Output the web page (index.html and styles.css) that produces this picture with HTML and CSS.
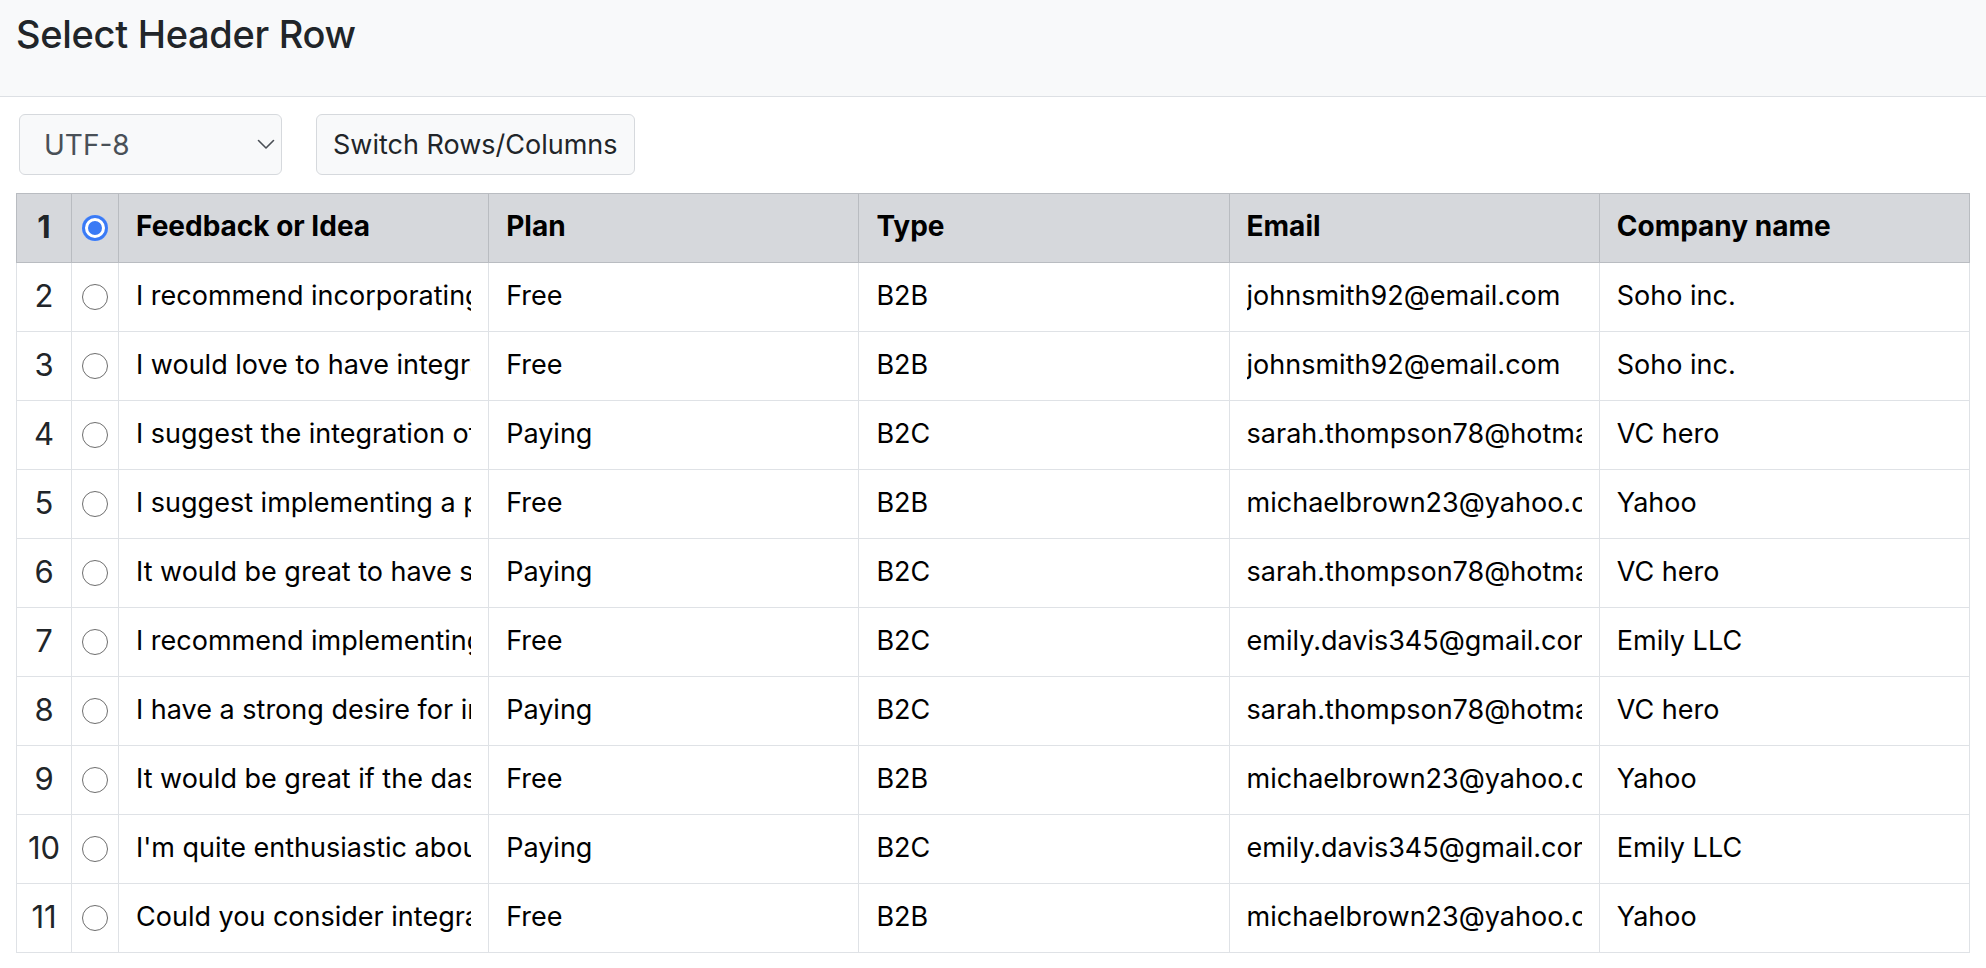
FILE: index.html
```html
<!DOCTYPE html>
<html lang="en">
<head>
<meta charset="utf-8">
<title>Select Header Row</title>
<link rel="stylesheet" href="styles.css">
</head>
<body>
<header class="page-header">
  <h1 class="title">Select Header Row</h1>
</header>
<div class="toolbar">
  <div class="select-wrap">
    <select class="encoding">
      <option>UTF-8</option>
    </select>
    <svg class="chevron" width="18" height="11" viewBox="0 0 18 11"><path d="M1.5 1.5 L9 9 L16.5 1.5" fill="none" stroke="#4a4f55" stroke-width="1.6" stroke-linecap="round" stroke-linejoin="round"/></svg>
  </div>
  <button class="btn">Switch Rows/Columns</button>
</div>
<table class="grid">
  <colgroup>
    <col class="c-num"><col class="c-radio"><col><col><col><col><col>
  </colgroup>
  <thead>
    <tr>
      <th class="num">1</th>
      <th class="rad"><input type="radio" name="hdr" class="radio" checked></th>
      <th><div class="clip">Feedback or Idea</div></th>
      <th><div class="clip">Plan</div></th>
      <th><div class="clip">Type</div></th>
      <th><div class="clip">Email</div></th>
      <th><div class="clip">Company name</div></th>
    </tr>
  </thead>
  <tbody>
    <tr><td class="num">2</td><td class="rad"><input type="radio" name="hdr" class="radio"></td><td><div class="clip">I recommend incorporating a feature</div></td><td><div class="clip">Free</div></td><td><div class="clip">B2B</div></td><td><div class="clip">johnsmith92@email.com</div></td><td><div class="clip">Soho inc.</div></td></tr>
    <tr><td class="num">3</td><td class="rad"><input type="radio" name="hdr" class="radio"></td><td><div class="clip">I would love to have integration</div></td><td><div class="clip">Free</div></td><td><div class="clip">B2B</div></td><td><div class="clip">johnsmith92@email.com</div></td><td><div class="clip">Soho inc.</div></td></tr>
    <tr><td class="num">4</td><td class="rad"><input type="radio" name="hdr" class="radio"></td><td><div class="clip">I suggest the integration of</div></td><td><div class="clip">Paying</div></td><td><div class="clip">B2C</div></td><td><div class="clip">sarah.thompson78@hotmail.com</div></td><td><div class="clip">VC hero</div></td></tr>
    <tr><td class="num">5</td><td class="rad"><input type="radio" name="hdr" class="radio"></td><td><div class="clip">I suggest implementing a progress</div></td><td><div class="clip">Free</div></td><td><div class="clip">B2B</div></td><td><div class="clip">michaelbrown23@yahoo.com</div></td><td><div class="clip">Yahoo</div></td></tr>
    <tr><td class="num">6</td><td class="rad"><input type="radio" name="hdr" class="radio"></td><td><div class="clip">It would be great to have support</div></td><td><div class="clip">Paying</div></td><td><div class="clip">B2C</div></td><td><div class="clip">sarah.thompson78@hotmail.com</div></td><td><div class="clip">VC hero</div></td></tr>
    <tr><td class="num">7</td><td class="rad"><input type="radio" name="hdr" class="radio"></td><td><div class="clip">I recommend implementing</div></td><td><div class="clip">Free</div></td><td><div class="clip">B2C</div></td><td><div class="clip">emily.davis345@gmail.com</div></td><td><div class="clip">Emily LLC</div></td></tr>
    <tr><td class="num">8</td><td class="rad"><input type="radio" name="hdr" class="radio"></td><td><div class="clip">I have a strong desire for integration</div></td><td><div class="clip">Paying</div></td><td><div class="clip">B2C</div></td><td><div class="clip">sarah.thompson78@hotmail.com</div></td><td><div class="clip">VC hero</div></td></tr>
    <tr><td class="num">9</td><td class="rad"><input type="radio" name="hdr" class="radio"></td><td><div class="clip">It would be great if the dashboard</div></td><td><div class="clip">Free</div></td><td><div class="clip">B2B</div></td><td><div class="clip">michaelbrown23@yahoo.com</div></td><td><div class="clip">Yahoo</div></td></tr>
    <tr><td class="num">10</td><td class="rad"><input type="radio" name="hdr" class="radio"></td><td><div class="clip">I'm quite enthusiastic about</div></td><td><div class="clip">Paying</div></td><td><div class="clip">B2C</div></td><td><div class="clip">emily.davis345@gmail.com</div></td><td><div class="clip">Emily LLC</div></td></tr>
    <tr><td class="num">11</td><td class="rad"><input type="radio" name="hdr" class="radio"></td><td><div class="clip">Could you consider integrating</div></td><td><div class="clip">Free</div></td><td><div class="clip">B2B</div></td><td><div class="clip">michaelbrown23@yahoo.com</div></td><td><div class="clip">Yahoo</div></td></tr>
  </tbody>
</table>
</body>
</html>
```

FILE: styles.css
```css
* { box-sizing: border-box; }
html, body { margin: 0; padding: 0; background: #fff; }
body {
  font-family: Inter, "Liberation Sans", Arial, sans-serif;
  color: #000;
}
.page-header {
  background: #f8f9fa;
  border-bottom: 1px solid #dde0e4;
  height: 97px;
  padding: 11px 16px 0 16px;
}
.title {
  margin: 0;
  font-size: 38px;
  line-height: 46px;
  font-weight: 500;
  color: #212529;
  letter-spacing: -0.3px;
}
.toolbar {
  display: flex;
  align-items: center;
  gap: 34px;
  padding: 17px 16px 18px 19px;
}
.select-wrap {
  position: relative;
  width: 263px;
  height: 61px;
}
.encoding {
  appearance: none;
  -webkit-appearance: none;
  width: 100%;
  height: 100%;
  background: #f8f9fa;
  border: 1px solid #d6d9dd;
  border-radius: 6px;
  padding: 0 40px 0 24px;
  font-family: inherit;
  font-size: 28px;
  color: #495057;
}
.chevron {
  position: absolute;
  left: 238px;
  top: 25px;
  pointer-events: none;
}
.btn {
  height: 61px;
  padding: 0 16px 1px 16px;
  background: #f8f9fa;
  border: 1px solid #d6d9dd;
  border-radius: 6px;
  font-family: inherit;
  font-size: 27px;
  color: #212529;
}
.grid {
  margin: 0 16px 0 16px;
  width: 1954px;
  border-collapse: collapse;
  table-layout: fixed;
}
.c-num { width: 55px; }
.c-radio { width: 47px; }
.grid th, .grid td {
  height: 69px;
  padding: 0 17px 3px 17px;
  border: 1px solid #dfe2e6;
  text-align: left;
  vertical-align: middle;
  font-size: 27px;
}
.grid thead th {
  background: #d6d8dc;
  border: 1.5px solid #b9bcc1;
  font-weight: 700;
  font-size: 28px;
  color: #000;
  padding-bottom: 5px;
}
.clip {
  overflow: hidden;
  white-space: nowrap;
}
.grid .num {
  padding: 0 0 3px 0;
  text-align: center;
  font-size: 31px;
  color: #212529;
}
.grid thead .num { font-size: 31px; padding-bottom: 4px; }
.grid .rad {
  padding: 0 0 1px 0;
  text-align: center;
}
.radio {
  appearance: none;
  -webkit-appearance: none;
  width: 26px;
  height: 26px;
  margin: 0;
  display: block;
  margin-left: auto;
  margin-right: auto;
  border-radius: 50%;
  border: 1.5px solid #6e6e6e;
  background: #fff;
}
.radio:checked {
  border: none;
  background: #3a7af5;
  box-shadow: inset 0 0 0 3px #3a7af5, inset 0 0 0 6px #fff;
}
```
